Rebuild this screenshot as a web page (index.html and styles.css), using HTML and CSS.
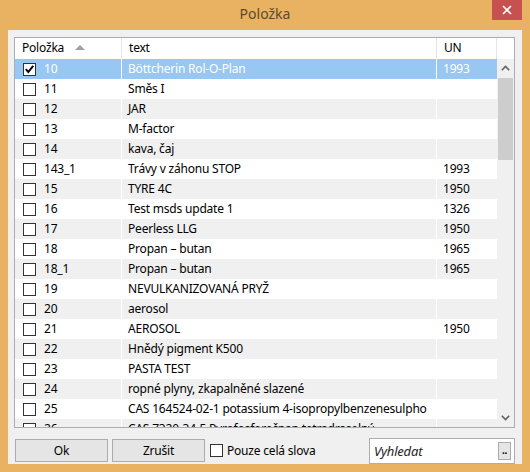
FILE: index.html
```html
<!DOCTYPE html>
<html>
<head>
<meta charset="utf-8">
<link rel="stylesheet" href="styles.css">
</head>
<body>
<div class="window">
  <div class="titlebar">
    <div class="title">Položka</div>
    <div class="close">
      <svg width="10" height="10" viewBox="0 0 10 10"><path d="M1 1 L9 9 M9 1 L1 9" stroke="#fff" stroke-width="1.6"/></svg>
    </div>
  </div>
  <div class="client">
    <div class="list">
      <div class="header">
        <div class="hcell c1">Položka <span class="sort"></span></div>
        <div class="hcell c2">text</div>
        <div class="hcell c3">UN</div>
        <div class="hcell c4"></div>
      </div>
      <div class="body">
        <div class="rows">
          <div class="row sel"><div class="cell c1"><span class="cb checked"><svg width="11" height="11" viewBox="0 0 11 11"><path d="M1.8 5.2 L4.3 8 L9.2 1.8" stroke="#000" stroke-width="2" fill="none"/></svg></span>10</div><div class="cell c2">Böttcherin Rol-O-Plan</div><div class="cell c3">1993</div></div>
          <div class="row"><div class="cell c1"><span class="cb"></span>11</div><div class="cell c2">Směs I</div><div class="cell c3"></div></div>
          <div class="row alt"><div class="cell c1"><span class="cb"></span>12</div><div class="cell c2">JAR</div><div class="cell c3"></div></div>
          <div class="row"><div class="cell c1"><span class="cb"></span>13</div><div class="cell c2">M-factor</div><div class="cell c3"></div></div>
          <div class="row alt"><div class="cell c1"><span class="cb"></span>14</div><div class="cell c2">kava, čaj</div><div class="cell c3"></div></div>
          <div class="row"><div class="cell c1"><span class="cb"></span>143_1</div><div class="cell c2">Trávy v záhonu STOP</div><div class="cell c3">1993</div></div>
          <div class="row alt"><div class="cell c1"><span class="cb"></span>15</div><div class="cell c2">TYRE 4C</div><div class="cell c3">1950</div></div>
          <div class="row"><div class="cell c1"><span class="cb"></span>16</div><div class="cell c2">Test msds update 1</div><div class="cell c3">1326</div></div>
          <div class="row alt"><div class="cell c1"><span class="cb"></span>17</div><div class="cell c2">Peerless LLG</div><div class="cell c3">1950</div></div>
          <div class="row"><div class="cell c1"><span class="cb"></span>18</div><div class="cell c2">Propan – butan</div><div class="cell c3">1965</div></div>
          <div class="row alt"><div class="cell c1"><span class="cb"></span>18_1</div><div class="cell c2">Propan – butan</div><div class="cell c3">1965</div></div>
          <div class="row"><div class="cell c1"><span class="cb"></span>19</div><div class="cell c2">NEVULKANIZOVANÁ PRYŽ</div><div class="cell c3"></div></div>
          <div class="row alt"><div class="cell c1"><span class="cb"></span>20</div><div class="cell c2">aerosol</div><div class="cell c3"></div></div>
          <div class="row"><div class="cell c1"><span class="cb"></span>21</div><div class="cell c2">AEROSOL</div><div class="cell c3">1950</div></div>
          <div class="row alt"><div class="cell c1"><span class="cb"></span>22</div><div class="cell c2">Hnědý pigment K500</div><div class="cell c3"></div></div>
          <div class="row"><div class="cell c1"><span class="cb"></span>23</div><div class="cell c2">PASTA TEST</div><div class="cell c3"></div></div>
          <div class="row alt"><div class="cell c1"><span class="cb"></span>24</div><div class="cell c2">ropné plyny, zkapalněné slazené</div><div class="cell c3"></div></div>
          <div class="row"><div class="cell c1"><span class="cb"></span>25</div><div class="cell c2">CAS 164524-02-1 potassium 4-isopropylbenzenesulpho</div><div class="cell c3"></div></div>
          <div class="row alt"><div class="cell c1"><span class="cb"></span>26</div><div class="cell c2">CAS 7320-34-5 Pyrofosforečnan tetradraselný</div><div class="cell c3"></div></div>
        </div>
        <div class="scrollbar">
          <div class="arrow"><svg width="9" height="6" viewBox="0 0 9 6"><path d="M0.8 5.2 L4.5 1.5 L8.2 5.2" stroke="#606060" stroke-width="1.6" fill="none"/></svg></div>
          <div class="track"><div class="thumb"></div></div>
          <div class="arrow"><svg width="9" height="6" viewBox="0 0 9 6"><path d="M0.8 0.8 L4.5 4.5 L8.2 0.8" stroke="#606060" stroke-width="1.6" fill="none"/></svg></div>
        </div>
      </div>
    </div>
    <div class="bottom">
      <button class="btn">Ok</button>
      <button class="btn">Zrušit</button>
      <label class="chk"><span class="cb"></span>Pouze celá slova</label>
      <div class="search">
        <span class="placeholder">Vyhledat</span>
        <span class="dots">..</span>
      </div>
    </div>
  </div>
</div>
</body>
</html>
```

FILE: styles.css
```css
* { box-sizing: border-box; }
html, body { margin: 0; padding: 0; }
body {
  font-family: "Segoe UI", "Noto Sans", "DejaVu Sans", sans-serif;
  font-size: 12px;
  letter-spacing: -0.2px;
  color: #000;
  width: 530px;
  height: 472px;
  overflow: hidden;
}
.window {
  width: 530px;
  height: 472px;
  background: #e8b262;
  display: flex;
  flex-direction: column;
  padding: 0 8px 8px 8px;
}
.titlebar {
  height: 30px;
  flex: none;
  position: relative;
  display: flex;
  align-items: center;
  justify-content: center;
}
.title {
  font-size: 14px;
  letter-spacing: 0;
  color: #5a4a2c;
  margin-top: -3px;
}
.close {
  position: absolute;
  right: 0;
  top: 0;
  width: 30px;
  height: 20px;
  background: #c75050;
  display: flex;
  align-items: center;
  justify-content: center;
}
.client {
  flex: 1;
  background: #f0f0f0;
  padding: 7px 7px 0 6px;
  display: flex;
  flex-direction: column;
}
.list {
  height: 391px;
  border: 1px solid #abadb3;
  background: #fff;
  display: flex;
  flex-direction: column;
}
.header {
  height: 21px;
  display: flex;
  flex: none;
}
.hcell {
  height: 21px;
  line-height: 20px;
  padding-left: 7px;
  border-right: 1px solid #e5e5e5;
  white-space: nowrap;
}
.c1 { width: 107px; flex: none; }
.c2 { width: 315px; flex: none; }
.c3 { width: 60px; flex: none; }
.c4 { flex: 1; border-right: none; }
.hcell.c1 { padding-left: 7px; }
.sort {
  display: inline-block;
  width: 0; height: 0;
  border-left: 5px solid transparent;
  border-right: 5px solid transparent;
  border-bottom: 5px solid #a0a0a0;
  margin-left: 8px;
  vertical-align: 2px;
}
.body {
  flex: 1;
  display: flex;
  overflow: hidden;
}
.rows {
  width: 482px;
  flex: none;
  overflow: hidden;
}
.row {
  height: 20px;
  display: flex;
  background: #fff;
}
.row.alt { background: #f0f0f0; }
.row.sel { background: #97c7f2; color: #fff; }
.cell {
  height: 20px;
  line-height: 20px;
  white-space: nowrap;
  overflow: hidden;
  border-right: 1px solid #fff;
  padding-left: 6px;
  display: flex;
  align-items: center;
}
.cell.c1 { padding-left: 8px; }
.cell.c3 { border-right: none; }
.cb {
  width: 13px;
  height: 13px;
  border: 1px solid #333;
  background: #fff;
  display: inline-flex;
  align-items: center;
  justify-content: center;
  margin-right: 8px;
  flex: none;
}
.scrollbar {
  width: 17px;
  flex: none;
  background: #f0f0f0;
  display: flex;
  flex-direction: column;
}
.arrow {
  height: 18px;
  flex: none;
  display: flex;
  align-items: center;
  justify-content: center;
}
.track {
  flex: 1;
  padding: 1px 1px;
}
.thumb {
  height: 82px;
  background: #cdcdcd;
}
.bottom {
  display: flex;
  align-items: center;
  margin-top: 9px;
  height: 27px;
}
.btn {
  font-family: inherit;
  font-size: 12px;
  letter-spacing: -0.2px;
  width: 93px;
  height: 23px;
  border: 1px solid #acacac;
  background: #e5e5e5;
  color: #000;
  margin: 0 0 0 1px;
  padding: 0;
}
.btn + .btn { margin-left: 4px; }
.chk {
  display: flex;
  align-items: center;
  margin-left: 5px;
}
.chk .cb {
  margin-right: 4px;
  border-color: #333;
}
.search {
  margin-left: auto;
  width: 146px;
  height: 26px;
  border: 1px solid #abadb3;
  background: #fff;
  display: flex;
  align-items: center;
  padding: 0 3px 0 4px;
}
.placeholder {
  font-style: italic;
  color: #222;
  flex: 1;
  font-size: 13px;
}
.dots {
  width: 13px;
  height: 18px;
  border: 1px solid #acacac;
  background: #e5e5e5;
  font-size: 10px;
  line-height: 14px;
  text-align: center;
  font-weight: bold;
}
```
